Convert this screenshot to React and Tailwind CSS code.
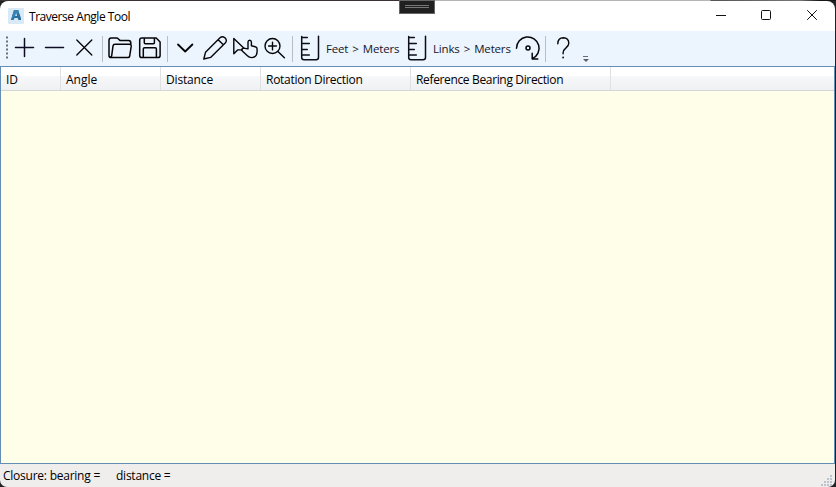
import React from "react";

function Tool({ children, label, stroke = 1.5 }) {
  return (
    <button aria-label={label} className="h-[35px] w-[30px] shrink-0">
      <svg
        width="30"
        height="35"
        viewBox="0 0 30 35"
        fill="none"
        stroke="#050508"
        strokeWidth={stroke}
        strokeLinecap="round"
        strokeLinejoin="round"
      >
        {children}
      </svg>
    </button>
  );
}

function Separator({ className }) {
  return <div className={`h-[26px] w-px shrink-0 bg-[#b9bdc4] ${className}`} />;
}

function Ruler({ label }) {
  return (
    <Tool label={label}>
      <path
        d="M6.7 5.5v21.1q0 2.2 2.2 2.2h12.2q2.4 0 2.4-2.2V5.2M6.7 6.5h5.6M6.7 12.4h7.6M6.7 18.4h5.6M6.7 24h7.6"
        stroke="#0c0c1c"
      />
    </Tool>
  );
}

function TitleBar() {
  return (
    <div className="relative flex h-[30px] shrink-0 items-center rounded-t-[8px] bg-white">
      <svg className="mb-px ml-2 shrink-0" width="16" height="16" viewBox="0 0 16 16">
        <rect width="16" height="16" rx="1" fill="#d9eaf6" />
        <path d="M3 12 6 2h4.2l2.8 8.2v1.8h-2.6l-.7-2H6.6L5.5 12z" fill="#2a6f9f" />
        <path d="M6 2h4.2l.9 2.9-4.2 3.3L3 12z" fill="#3584b5" />
        <path d="M7.2 8 8.1 5.1 9.1 8z" fill="#d9eaf6" />
      </svg>
      <span className="ml-[5px] w-[104px] whitespace-nowrap pt-px tracking-[-0.46px]">Traverse Angle Tool</span>
      <div className="absolute -top-px left-[399px] flex h-[14px] w-[36px] flex-col items-center gap-px border border-[#666] bg-[#202020] pt-1">
        <div className="h-px w-6 bg-[#777]" />
        <div className="h-px w-6 bg-[#777]" />
      </div>
      <svg
        className="-mr-px ml-auto shrink-0"
        width="140"
        height="30"
        viewBox="0 0 140 30"
        fill="none"
        stroke="#111"
      >
        <path d="M20 14.5h10" />
        <rect x="65.5" y="9.5" width="9" height="9" rx="1" />
        <path d="m111.2 9.2 9.6 9.6m0-9.6-9.6 9.6" />
      </svg>
    </div>
  );
}

function Toolbar() {
  return (
    <div className="flex h-[35px] shrink-0 items-center bg-[#ecf4fd]">
      <svg className="ml-[6px] mr-px shrink-0" width="2" height="35">
        <path d="M1 5.5v23" stroke="#6e7278" strokeWidth="2" strokeDasharray="2 2" />
      </svg>
      <Tool label="Add">
        <path d="M6.5 16.5h18M15.5 7.5v18" stroke="#0c0c24" />
      </Tool>
      <Tool label="Remove">
        <path d="M6.5 16.5h18" stroke="#0c0c24" />
      </Tool>
      <Tool label="Clear" stroke={1.3}>
        <path d="m7.8 9 15 15m0-15-15 15" />
      </Tool>
      <Separator className="ml-[3px] mr-[2px]" />
      <Tool label="Open">
        <path d="M6.2 26.6q-2.2 0-2.2-2.2V9.2q0-2.3 2.2-2.3h5.3q1 0 1.7.8l1.7 1.7h8.6q2.3 0 2.3 2.5v1.4M6.2 26.6h16.7q1.5 0 1.8-1.6l1.5-9.6q.2-2.1-1.8-2.1H10q-1.7 0-2 1.7L6.7 24.6q-.4 2-2 1" />
      </Tool>
      <Tool label="Save">
        <path d="M6.9 6.9h14.3l3.9 4v13.5q0 2.2-2.2 2.2h-16q-2.2 0-2.2-2.2V9.1q0-2.2 2.2-2.2zM9.3 7v4.8q0 1 1 1h8.1q1 0 1-1V7M8.3 26.4V18q0-1.2 1.2-1.2h10.7q1.2 0 1.2 1.2v8.4" />
      </Tool>
      <Separator className="ml-[2px] mr-[2px]" />
      <Tool label="Expand" stroke={1.8}>
        <path d="m8 13.5 7.2 7 7.2-7" />
      </Tool>
      <Tool label="Edit" stroke={1.4}>
        <path d="m3.8 28 1.7-6.7L20 6.8q2.2-2 4.7-.2 3 2.8.5 5.4L10.6 26.4zM18.2 8.7l5.1 5.1" />
      </Tool>
      <Tool label="Select" stroke={1.4}>
        <path d="M3.8 7.6v15.2l3.8-3.9h4.6M3.8 7.6l10.2 9.6" />
        <path d="M13.2 17.1l4.8.8v-6.8q.1-1.9 1.7-1.9t1.7 1.9v3.7l3.8.9q1.9.5 1.9 2.4v2.7q-.3 5.6-5 5.8-2.9.1-4.7-1.9l-5.1-4.6q-1.5-2 .9-3z" />
      </Tool>
      <Tool label="Zoom" stroke={1.4}>
        <circle cx="12.5" cy="15" r="7.5" />
        <path d="m17.9 20.4 6.5 6.4M8.6 15h7.8m-3.9-3.9v7.8" />
      </Tool>
      <Separator className="ml-[2px] mr-[2px]" />
      <Ruler label="Feet to meters" />
      <span className="w-[77px] shrink-0 whitespace-nowrap pl-px text-[11.5px] tracking-[-0.16px] text-[#15152a] [word-spacing:1.2px]">
        Feet &gt; Meters
      </span>
      <Ruler label="Links to meters" />
      <span className="w-[81px] shrink-0 whitespace-nowrap pl-px text-[11.5px] tracking-[-0.16px] text-[#15152a] [word-spacing:1.2px]">
        Links &gt; Meters
      </span>
      <Tool label="Rotate">
        <path d="M3.5 17.2a11.3 11.3 0 1 1 15.8 10.4M19.2 22.3v5.6h5.6" />
        <circle cx="15" cy="17" r="2" />
      </Tool>
      <Separator className="ml-[2px] mr-[2px]" />
      <Tool label="Help" stroke={1.4}>
        <path d="M9.8 12.8q.1-6 5.6-6 5.3.2 5.4 5.4 0 2.3-2.8 4.7-2.9 2.3-2.9 5v.8" />
        <circle cx="15.1" cy="26.5" r=".9" fill="#050508" stroke="none" />
      </Tool>
      <svg className="ml-[5px] shrink-0" width="6" height="35" viewBox="0 0 6 35">
        <path d="M0 25.5h5" stroke="#6b6b70" />
        <path d="M0 28h6l-3 3z" fill="#5c5c62" />
      </svg>
    </div>
  );
}

const columns = [
  { name: "ID", style: "w-[60px]" },
  { name: "Angle", style: "w-[100px]" },
  { name: "Distance", style: "w-[100px] tracking-[-0.16px]" },
  { name: "Rotation Direction", style: "w-[150px] tracking-[-0.28px]" },
  { name: "Reference Bearing Direction", style: "w-[200px] tracking-[-0.35px]" },
];

function Table() {
  return (
    <div className="flex flex-1 flex-col border border-[#648eb5] bg-[#ffffe9]">
      <div className="flex h-6 shrink-0 border-b border-[#d5d6d8] bg-[linear-gradient(#fff_0,#fff_9px,#f7f8f9_9px,#f0f1f3_23px)]">
        {columns.map((column) => (
          <div
            key={column.name}
            className={`flex items-center whitespace-nowrap border-r border-[#e0e1e3] pl-[5px] pt-[3px] ${column.style}`}
          >
            {column.name}
          </div>
        ))}
      </div>
    </div>
  );
}

function StatusBar() {
  return (
    <div className="flex h-[23px] shrink-0 items-center rounded-b-[7px] bg-[#f0eded] pl-[3px] tracking-[-0.24px]">
      <span className="w-[113px] whitespace-nowrap pt-px">Closure: bearing =</span>
      <span className="whitespace-nowrap pt-px">distance =</span>
      <svg className="ml-auto mr-[2px] shrink-0" width="12" height="23" viewBox="0 0 12 23" fill="#bcc3cd">
        <path d="M9 11h2v2H9zM6 14h2v2H6zM9 14h2v2H9zM3 17h2v2H3zM6 17h2v2H6zM9 17h2v2H9zM0 20h2v2H0zM3 20h2v2H3zM6 20h2v2H6zM9 20h2v2H9z" />
      </svg>
    </div>
  );
}

export default function App() {
  return (
    <div className="flex h-[487px] w-[836px] flex-col overflow-hidden bg-[#202123] pr-px font-['Open_Sans','Noto_Sans',sans-serif] text-[12px] leading-4 text-black">
      <div className="-mr-px h-px shrink-0 bg-[linear-gradient(90deg,#383234_0,#383234_399px,#b5b5b5_435px,#b5b5b5_710px,#555_711px,#777_800px,#151515_820px)]" />
      <TitleBar />
      <Toolbar />
      <Table />
      <StatusBar />
    </div>
  );
}
